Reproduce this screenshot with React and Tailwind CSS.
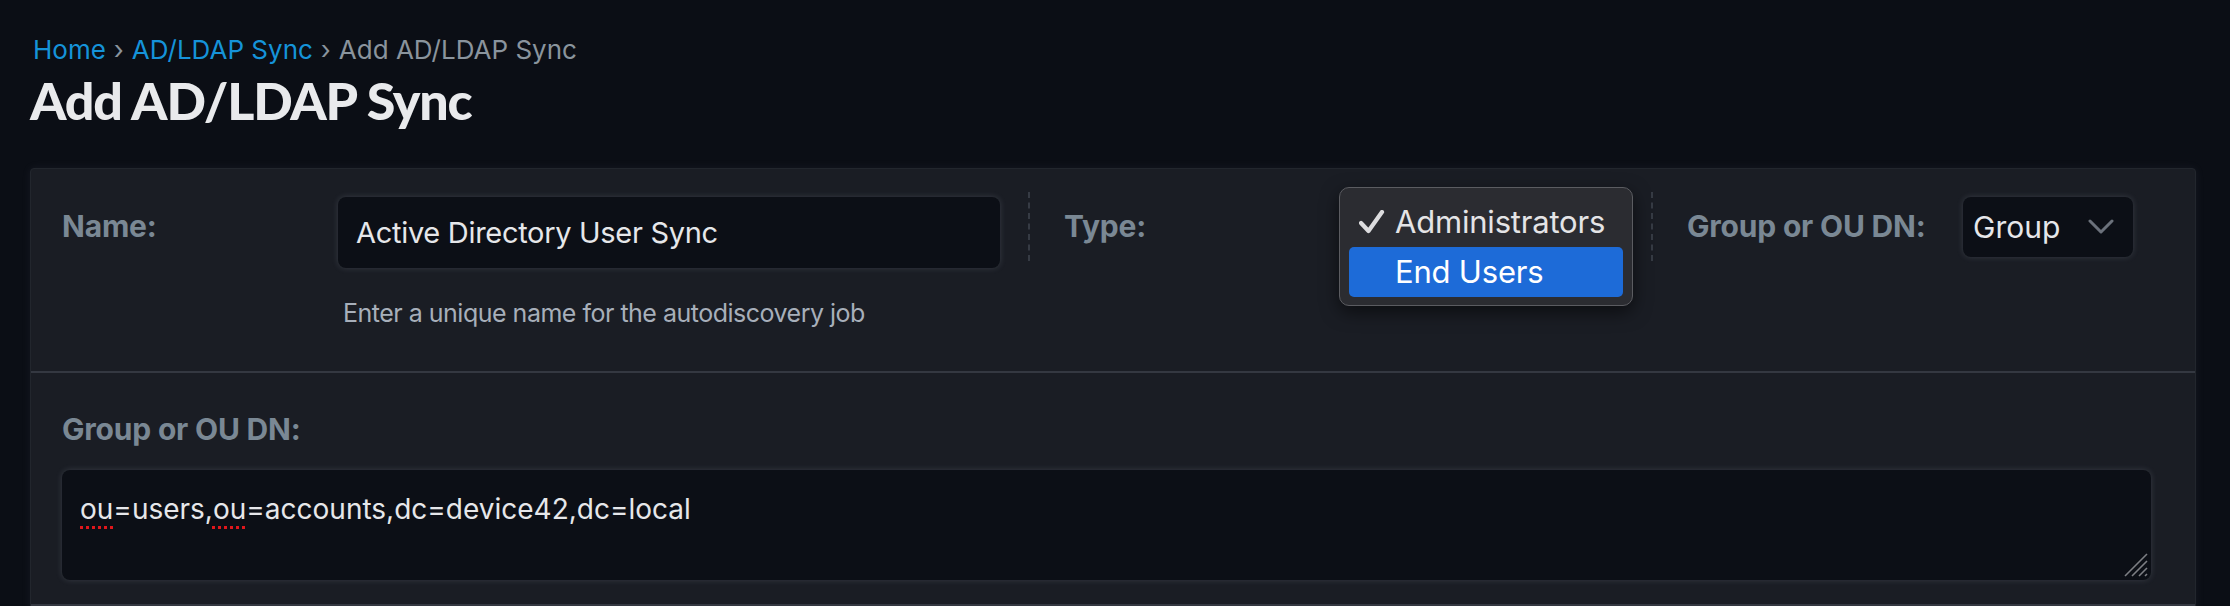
import React from "react";

const uiFont = { fontFamily: "Inter, 'Noto Sans', sans-serif" };
const labelClass = "text-[30px] leading-[45px] font-bold text-[#7a8894] mt-[12px] tracking-[-0.2px]";
const fieldClass = "bg-[#0c0f16] rounded-[8px] shadow-[0_0_6px_rgba(190,200,215,0.18)] text-[#e6e7ea]";

const Separator = () => (
  <div className="ml-[28px] w-0 h-[69px] border-l-[2px] border-dashed border-[#363b44]" />
);

const CheckMark = () => (
  <svg width="26" height="24" viewBox="0 0 26 24" className="shrink-0">
    <path d="M2 13 L9.5 21 L23 2" fill="none" stroke="#dcdcde" strokeWidth="4.2" strokeLinecap="round" strokeLinejoin="round" />
  </svg>
);

const TypePopup = () => (
  <div className="absolute left-0 top-[-5px] w-[294px] h-[119px] rounded-[10px] border border-[#5b5c61] bg-[#2b2c31] shadow-[0_6px_18px_rgba(0,0,0,0.55)] pt-[9px] px-[9px]"
    style={{ fontFamily: "Inter, 'Noto Sans', sans-serif" }}>
    <div className="h-[50px] flex items-center pl-[10px] text-[31px] tracking-[-0.2px] text-[#e4e4e6]">
      <CheckMark />
      <span className="ml-[10px]">Administrators</span>
    </div>
    <div className="h-[50px] flex items-center pl-[46px] rounded-[5px] bg-[#1d6bd8] text-[31px] tracking-[-0.2px] text-white">
      End Users
    </div>
  </div>
);

const Breadcrumb = () => (
  <div className="text-[26px] leading-[39px] text-[#8a949d]">
    <span className="text-[#1593d9]">Home</span>
    <span className="mx-[8px]">›</span>
    <span className="text-[#1593d9]">AD/LDAP Sync</span>
    <span className="mx-[8px]">›</span>
    <span>Add AD/LDAP Sync</span>
  </div>
);

export default function App() {
  return (
    <div className="min-h-screen bg-[#0b0e15] pt-[30px] pl-[30px] pr-[34px] overflow-hidden" style={uiFont}>
      <div className="pl-[3px]">
        <Breadcrumb />
      </div>
      <h1 className="text-[52px] leading-[62px] font-black text-[#e9eaec] tracking-[-1.2px]"
        style={{ fontFamily: "Lato, 'Open Sans', sans-serif" }}>
        Add AD/LDAP Sync
      </h1>

      <div className="mt-[37px] bg-[#1a1d24] border border-[#22262d] rounded-[4px] shadow-[0_0_10px_rgba(160,170,190,0.08)]">
        {/* first row */}
        <div className="flex items-start pt-[23px] pl-[31px] pb-[38px] border-b-[2px] border-[#343841]">
          <div className={labelClass + " w-[276px]"}>Name:</div>
          <div className="w-[662px]">
            <div className={fieldClass + " mt-[5px] h-[71px] flex items-center pl-[18px] text-[29px] tracking-[-0.3px]"}>
              Active Directory User Sync
            </div>
            <div className="mt-[25px] pl-[5px] text-[25px] leading-[40px] tracking-[-0.5px] text-[#a7afba]">
              Enter a unique name for the autodiscovery job
            </div>
          </div>

          <Separator />
          <div className={labelClass + " ml-[34px] w-[275px]"}>Type:</div>
          <div className="relative w-[284px] h-[69px]">
            <TypePopup />
          </div>

          <Separator />
          <div className={labelClass + " ml-[34px] w-[276px]"}>Group or OU DN:</div>
          <div className={fieldClass + " mt-[5px] w-[170px] h-[60px] flex items-center justify-between pl-[10px] pr-[19px] text-[30px]"}>
            <span>Group</span>
            <svg width="26" height="16" viewBox="0 0 26 16">
              <path d="M2 2 L13 13 L24 2" fill="none" stroke="#6b717b" strokeWidth="3" strokeLinecap="round" strokeLinejoin="round" />
            </svg>
          </div>
        </div>

        {/* second row */}
        <div className="pt-[34px] pl-[31px] pr-[44px] pb-[24px] border-b-[2px] border-[#343841]">
          <div className="text-[30px] leading-[45px] font-bold text-[#7a8894] tracking-[-0.2px]">Group or OU DN:</div>
          <div className={fieldClass + " relative mt-[18px] h-[110px] pt-[18px] pl-[18px] text-[28px] leading-[42px]"}>
            <span className="underline decoration-dotted decoration-[#e0161b] decoration-[3px] underline-offset-[7px]">ou</span>
            =users,
            <span className="underline decoration-dotted decoration-[#e0161b] decoration-[3px] underline-offset-[7px]">ou</span>
            =accounts,dc=device42,dc=local
            <svg className="absolute right-[2px] bottom-[2px]" width="26" height="26" viewBox="0 0 26 26">
              <path d="M2 24 L24 2 M9 24 L24 9 M16 24 L24 16 M22 24 L24 22" stroke="#7d7f84" strokeWidth="1.6" />
            </svg>
          </div>
        </div>
        <div className="h-[20px]" />
      </div>
    </div>
  );
}
